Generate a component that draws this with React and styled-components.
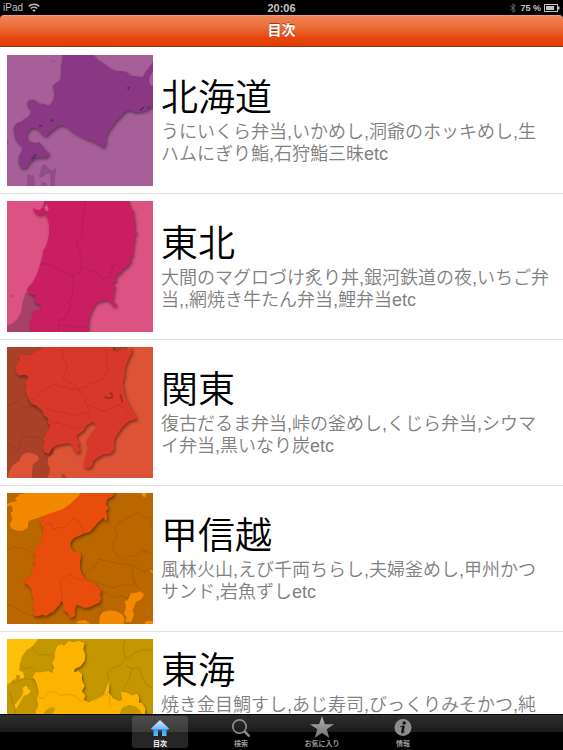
import React from 'react';
import styled, { createGlobalStyle } from 'styled-components';

const GlobalStyle = createGlobalStyle`
  * {
    box-sizing: border-box;
  }

  body {
    margin: 0;
    background: #000;
    font-family: 'Liberation Sans', 'Noto Sans CJK JP', sans-serif;
  }
`;

const Screen = styled.div`
  display: flex;
  flex-direction: column;
  height: 100vh;
  background: #000;
`;

const StatusBar = styled.div`
  display: grid;
  grid-template-columns: 1fr auto 1fr;
  align-items: center;
  flex: none;
  height: 15px;
  padding: 0 3px;
  color: #c4c4c4;
  font-size: 10px;
  line-height: 14px;
`;

const StatusGroup = styled.div`
  display: flex;
  align-items: center;
  justify-content: ${({ $end }) => ($end ? 'flex-end' : 'flex-start')};
  gap: ${({ $end }) => ($end ? '3px' : '5px')};
`;

const Clock = styled.time`
  font-size: 11px;
  font-weight: bold;
`;

const Percent = styled.span`
  font-size: 9px;
  font-weight: bold;
`;

const NavBar = styled.header`
  flex: none;
  height: 32px;
  border-top: 1px solid #f29a78;
  border-bottom: 1px solid #8e3410;
  border-radius: 4px 4px 0 0;
  background: linear-gradient(#f08457, #eb6a35 40%, #e5450d 75%, #e43d05);
`;

const NavTitle = styled.h1`
  margin: 0;
  color: #fff;
  font-size: 14px;
  font-weight: bold;
  line-height: 29px;
  text-align: center;
  text-shadow: 0 -1px 0 rgba(0, 0, 0, 0.45);
`;

const List = styled.ul`
  flex: 1;
  min-height: 0;
  margin: 0;
  padding: 1px 0 0;
  overflow-y: auto;
  scrollbar-width: none;
  background: #fff;
  list-style: none;
`;

const Row = styled.li`
  border-bottom: 1px solid #e0e0e0;
`;

const RowLink = styled.a`
  display: flex;
  align-items: center;
  gap: 8px;
  padding: 7px 12px 7px 7px;
  color: #000;
  text-decoration: none;
`;

const Thumb = styled.svg`
  display: block;
  flex: none;
  width: 146px;
  height: 131px;
`;

const Name = styled.h2`
  margin: 0;
  font-size: 37px;
  font-weight: 350;
  line-height: 44px;
`;

const Detail = styled.p`
  margin: 0;
  color: #808080;
  font-size: 18px;
  font-weight: 350;
  line-height: 22px;
`;

const TabBar = styled.nav`
  display: flex;
  flex: none;
  justify-content: center;
  gap: 25px;
  height: 36px;
  padding: 1px 0 2px;
  border-top: 1px solid #000;
  background: linear-gradient(#2e2e2e, #1b1b1b 50%, #000 50%);
`;

const Tab = styled.button`
  display: flex;
  flex-direction: column;
  align-items: center;
  justify-content: space-between;
  width: 56px;
  padding: 0;
  border: 0;
  border-radius: 3px;
  background: ${({ $active }) => ($active ? 'rgba(255, 255, 255, 0.15)' : 'none')};
  color: ${({ $active }) => ($active ? '#fff' : '#999')};
  font-family: inherit;
  font-size: 7px;
  font-weight: bold;
  line-height: 8px;
  white-space: nowrap;
`;

const TabIcon = styled.svg`
  display: block;
  width: 24px;
  height: 22px;
`;

const Land = styled.path`
  filter: drop-shadow(3px 5px 5px rgba(0, 0, 0, 0.45));
`;

const Border = styled.path`
  fill: none;
  stroke: rgba(60, 0, 0, 0.2);
  stroke-width: 2;
  stroke-linejoin: round;
`;

function HokkaidoMap() {
  return (
    <Thumb viewBox="21 18 438 393" preserveAspectRatio="none" aria-hidden="true">
      <rect x="21" y="18" width="438" height="393" fill="#a65f99" />
      <path fill="#8e4f86" d="M82 411l-1-34 9-2 3 7 9-5 4 34zM118 378l7-28 12-4 6 10 12 8 14-7-3 28-2 26h-12l-2-38-12 3-10 8-10 4zM122 411l4-11 12 2 4 9zM21 272l5 6-5 14z" />
      <path fill="#95548c" d="M152 36l10-2 5 3-8 4z" />
      <Land
        fill="#8a3784"
        d="M188 10L186 40 182 52 184 66 181 92 164 105 158 112 163 128 161 150 154 162 146 170 132 165 118 164 102 152 88 152 80 162 84 174 95 186 86 202 72 210 66 217 56 220 46 226 40 240 44 260 48 274 58 284 68 292 64 308 56 322 56 346 64 357 78 357 88 342 100 330 118 324 132 326 146 320 148 312 136 304 126 290 118 280 104 282 94 278 84 276 79 262 82 250 90 240 104 236 114 240 120 250 138 263 148 252 164 238 180 229 196 230 218 248 250 266 284 280 312 296 318 282 318 262 330 240 352 212 374 190 386 183 404 190 424 188 440 184 450 176 462 170 462 112 450 104 448 90 456 78 462 68 462 34 450 52 434 72 428 84 410 82 392 80 380 70 368 66 352 66 336 62 314 46 294 34 276 14 274 8z"
      />
      <path fill="#5f2560" d="M383 112l6 2-3 9-4-3zM118 227l9 2-4 5-6-2zM153 212l9-1-4 6-6 1zM104 315l8 2-6 4-5 9-9 2zM420 180l14-8-4 8-9 6zM441 178l6-10 2 3-5 8z" />
      <path fill="#a65f99" d="M459 66l-10 18-2 14 4 10 8 4z" />
    </Thumb>
  );
}

function TohokuMap() {
  return (
    <Thumb viewBox="21 18 438 393" preserveAspectRatio="none" aria-hidden="true">
      <rect x="21" y="18" width="438" height="393" fill="#db5283" />
      <path fill="#a64168" d="M78 290l50 20v102H21v-21l14-4 16-14 12-22 4-28z" />
      <Land
        fill="#c91e62"
        d="M134 10L132 22 130 34 118 46 108 44 101 38 100 46 108 56 116 60 128 58 136 56 142 68 147 86 147 118 143 138 136 158 130 166 128 182 124 196 118 216 110 240 98 262 84 278 80 286 94 298 106 302 104 314 104 322 120 330 124 336 118 348 106 346 98 352 97 368 90 380 90 396 96 420 265 420 265 384 272 354 280 338 288 324 304 318 320 316 332 322 338 334 350 336 350 328 340 320 338 308 344 302 338 294 346 290 342 282 350 276 340 272 338 264 352 258 346 250 352 240 362 234 370 222 384 214 386 206 396 200 390 190 400 182 398 170 402 160 400 148 406 138 402 126 411 114 404 102 406 88 402 68 402 50 390 34 384 10z"
      />
      <path fill="#c8648c" d="M133 38l7-10 6 14-6 8z" />
      <Border d="M254 18l-2 42-8 6 6 12-4 20 2 18-8 14-10 16 4 14 8 12-4 12 6 20-2 20-2 8-22 12-10-6-12-8-16-2-8-8-16-4-8-8-16-2-14 4M216 232l6 14 0 20-6 12 2 22-12 20 6 14-10 20-6 18-20 4v35M240 220l12-2 10 6 14 4 14 4 4 10 14 10 22-6 10-38 12 6 8 4M176 396l22-6 22 6 20-2 24 6" />
      <path fill="#a73766" d="M35 302l4-4 1 6-4 3z" />
    </Thumb>
  );
}

function KantoMap() {
  return (
    <Thumb viewBox="21 20 438 393" preserveAspectRatio="none" aria-hidden="true">
      <rect x="21" y="20" width="438" height="393" fill="#dc5435" />
      <path fill="#a94128" d="M21 20h180l-40 200v120l-16 10-2 20 8 14-8 29H96l2-40 18-14-2-12-16-8-18-2-14 8-8 16-20 14-10 16-6 22H21zM184 402l12 2 4 9h-14zM330 20h56l-20 24h-24z" />
      <Border d="M21 200l14-10 14-6 8 10 24 8 16-4 20 14 20 22 12 22M21 310l20 8 10 12 8-6 2-20 8-22 14 10 20-4 18 6" />
      <Land
        fill="#d83829"
        d="M124 14L122 28 106 34 94 42 82 46 66 42 58 46 60 58 52 70 48 82 50 98 58 106 72 104 82 106 84 114 76 124 80 138 76 148 80 160 84 172 90 184 98 192 110 196 120 206 128 212 132 226 144 234 142 246 150 256 146 268 138 276 136 290 128 294 134 306 128 322 134 336 146 342 152 332 158 322 172 314 188 312 204 308 216 314 222 326 232 340 242 328 234 318 240 308 232 298 230 286 240 278 252 270 258 256 270 250 276 244 286 252 288 262 276 276 266 290 258 304 264 318 262 332 256 346 256 358 250 370 254 382 268 384 276 376 280 362 296 350 312 342 330 340 344 326 342 312 344 296 356 276 370 258 388 242 412 236 406 224 398 210 386 190 376 168 372 144 368 128 374 110 374 90 380 70 386 54 394 40 398 20 382 28 368 26 354 34 340 30 336 12z"
      />
      <Border d="M182 20l8 20-4 18 16 14-2 16-8 14-4 10 16 12 18 8 14 14 4 4 6-10 16-2 8-8 18-6 20-6 8-16 8-12-4-18 2-26-6-26M84 182l18-8 14-10 12-12 18-12 20-8 16 8 16-4 14 10 22 2M236 146l8 14 14 14-4 8 8 12 8 22-2 18M130 200l22 10 18 4 18 0 20 8 26 2 14-8 16 6M144 240l16 8 20 0 10 10 14-8 6 14 12-6 10 10 10-12M264 194l16 6 16 8 20 4 18-10 24-8 14 8 14 16 14 12" />
      <path fill="none" stroke="#8e2a1c" strokeWidth="4" d="M314 170l12 4 10-2 0-12-8-2M360 162l8 24" />
    </Thumb>
  );
}

function KoshinetsuMap() {
  return (
    <Thumb viewBox="21 21 438 393" preserveAspectRatio="none" aria-hidden="true">
      <rect x="21" y="21" width="438" height="393" fill="#bb6700" />
      <Border d="M21 192l24-8 26 4 20 10 14 14M21 356l26 8 20 16 28 8 34 10 6 20M344 124l14-16 20-10 16-10 20-8 18 14 18 0 4 30M344 124l8 20-14 30 4 22 12 16 14 12 20-14 18-2 24-14 24 8M250 270l14-14 20-16 14-20 24 6 26 4 20 6 14-4 16 22 4 30 10 20M276 284l20 6 24 10 18 6 30-10 14 4 22-8M300 314l20 8 22 12 20-6 20 10 6-14M388 234l20 10 24 14 27-12M290 350l16 14-8 24-16 20" />
      <Land
        fill="#e94d0c"
        d="M244 14L210 50 120 98 124 118 130 130 128 156 120 166 114 182 104 194 106 212 100 226 106 238 98 252 92 270 84 280 74 278 72 290 84 298 94 310 96 326 102 342 98 360 104 372 100 388 112 392 126 386 138 390 150 382 160 378 170 366 178 358 184 344 190 352 188 368 194 376 204 380 208 392 216 396 226 388 224 374 230 356 240 360 254 366 270 364 284 356 298 350 304 340 300 326 304 314 292 302 282 292 266 284 254 276 244 260 240 244 240 226 244 212 240 198 222 198 212 184 212 168 222 156 236 150 254 142 270 138 280 126 296 108 310 96 320 108 322 92 318 76 326 66 318 56 322 40 340 30 344 14z"
      />
      <Border d="M126 126l6-6 14-8 10 4 4 14 18-6 18 2 14-16 10-14 14 8 10 14 8 20M184 344l2-24-6-22 2-16 14-10 8-6 12 2 10 10 18 4 12 0" />
      <path fill="#f28900" d="M21 21l28 6 30-6h164l-14 16-18 16-22 16-42 14-36 14-26 8-2 20-16 10-20-2-14-6-4-12 8-14-4-18 0-16-12-4zM424 21h16l-4 14-10-6zM298 414l2-26 10-10 20-5 22 4 14 8 8 14-4 15zM374 376l4-14-4-16 10-4 8-20 16-2 14-4 10 10-8 14-16 8-6 14-4 12 4 12-8 22h-18l4-16-8-8zM228 412l8-8 20-2 14 12zM434 408l14-4 11 2v8h-24zM450 250l9 6v6l-8-4z" />
      <path fill="#bb6700" d="M21 21h18l20 6-14 10 6 8-18 4-12 4zM21 62l14-5 4 20-18 3z" />
    </Thumb>
  );
}

function TokaiMap() {
  return (
    <Thumb viewBox="21 22 438 393" preserveAspectRatio="none" aria-hidden="true">
      <rect x="21" y="22" width="438" height="393" fill="#c49700" />
      <path fill="#fcc008" d="M21 22h94l-18 22-18 12-14 20-6 26-2 14 12 6 4 16-12 4-2-12-10 0-2 12-10 4-4 8-12 6z" />
      <path fill="#fcc008" d="M68 168l12-6 4 10 8 4-6 12-14 4-10 16-8 16-6 8-4-12 8-10 12-14 6-14z" />
      <Border d="M60 92l10 22 20-8 16 14M96 46l20 22 20 2 22 0M21 158l30-8 22-10 26 4M40 414l10-160-20-70M376 22l-6 24 6 36-14 18-24 8-16 16 4 22M376 82l24-16 30-12 29 2M376 100l20 12 20-6 8 24 16 30 19 10M396 112l-8 30-18 30" />
      <Land
        fill="#fdb400"
        d="M192 42L206 28 220 32 236 28 254 34 250 52 256 70 254 88 242 104 224 112 222 122 236 118 246 128 246 146 254 164 246 178 256 192 252 204 266 212 280 206 298 196 312 188 318 170 326 150 328 170 326 184 340 200 356 208 366 204 362 180 378 182 396 190 412 186 418 200 416 212 428 216 436 230 434 260 430 420 110 420 114 260 106 240 114 222 110 200 116 184 112 164 106 146 98 136 106 122 124 122 146 118 156 124 162 108 156 94 164 80 164 62 172 42 184 38z"
      />
      <Border d="M110 196l20 4 20-20 18 2 14 10 22-4 22 6 16 14 12-2M284 208l30-20 14 6 2 30M132 246l14-18 18 0" />
      <path fill="#c49700" d="M358 250l8-22 20-8 20 4 16 14 6 20zM130 250l8-14 18-8 10 4-12 18z" />
    </Thumb>
  );
}

function HomeIcon() {
  return (
    <TabIcon viewBox="0 0 24 22" aria-hidden="true">
      <defs>
        <linearGradient id="home" x1="0" y1="0" x2="0" y2="1">
          <stop offset="0" stopColor="#d5ecff" />
          <stop offset="0.55" stopColor="#78b9f8" />
          <stop offset="0.56" stopColor="#3f94f0" />
          <stop offset="1" stopColor="#58c4fb" />
        </linearGradient>
      </defs>
      <path fill="url(#home)" d="M12 4L21 12.500 20 14H18.500V20H14V14H10V20H5.500V14H4L3 12.500z" />
    </TabIcon>
  );
}

function SearchIcon() {
  return (
    <TabIcon viewBox="0 0 24 22" fill="none" stroke="#8c8c8c" aria-hidden="true">
      <circle cx="10.500" cy="10.500" r="6.700" strokeWidth="1.700" />
      <path strokeWidth="2.600" strokeLinecap="round" d="M15.700 15.700l4 4" />
    </TabIcon>
  );
}

function StarIcon() {
  return (
    <TabIcon viewBox="0 0 24 22" aria-hidden="true">
      <defs>
        <linearGradient id="star" x1="0" y1="0" x2="0" y2="1">
          <stop offset="0" stopColor="#b4b4b4" />
          <stop offset="1" stopColor="#707070" />
        </linearGradient>
      </defs>
      <path fill="url(#star)" d="M12 0l2.900 8.200H24l-7.300 5.100L19.400 22 12 16.900 4.600 22l2.700-8.700L0 8.200h9.100z" />
    </TabIcon>
  );
}

function InfoIcon() {
  return (
    <TabIcon viewBox="0 0 24 22" aria-hidden="true">
      <circle cx="12" cy="11.500" r="8.500" fill="#8c8c8c" />
      <circle cx="13.200" cy="7" r="1.700" fill="#111" />
      <path fill="none" stroke="#111" strokeWidth="2.400" d="M12.700 10l-1.600 6.500" />
      <path fill="none" stroke="#111" strokeWidth="1" d="M9.200 10.800l3.600-1M10.500 16.900c1.500 .4 2.500-.4 3.300-1.500" />
    </TabIcon>
  );
}

const regions = [
  {
    name: '北海道',
    detail: 'うにいくら弁当,いかめし,洞爺のホッキめし,生ハムにぎり鮨,石狩鮨三昧etc',
    Map: HokkaidoMap,
  },
  {
    name: '東北',
    detail: '大間のマグロづけ炙り丼,銀河鉄道の夜,いちご弁当,,網焼き牛たん弁当,鯉弁当etc',
    Map: TohokuMap,
  },
  {
    name: '関東',
    detail: '復古だるま弁当,峠の釜めし,くじら弁当,シウマイ弁当,黒いなり炭etc',
    Map: KantoMap,
  },
  {
    name: '甲信越',
    detail: '風林火山,えび千両ちらし,夫婦釜めし,甲州かつサンド,岩魚ずしetc',
    Map: KoshinetsuMap,
  },
  {
    name: '東海',
    detail: '焼き金目鯛すし,あじ寿司,びっくりみそかつ,純系名古屋コーチンとりめし,ひつまぶし弁当,松阪牛弁当etc',
    Map: TokaiMap,
  },
];

const tabs = [
  { label: '目次', Icon: HomeIcon, active: true },
  { label: '検索', Icon: SearchIcon },
  { label: 'お気に入り', Icon: StarIcon },
  { label: '情報', Icon: InfoIcon },
];

export default function App() {
  return (
    <Screen lang="ja">
      <GlobalStyle />

      <StatusBar>
        <StatusGroup>
          <span>iPad</span>
          <svg width="12" height="9" viewBox="0 0 12 9" fill="none" stroke="#c4c4c4" aria-hidden="true">
            <path strokeWidth="1.500" d="M.8 3.400C3.600.5 8.400.5 11.200 3.400M2.900 5.500c1.700-1.700 4.500-1.700 6.200 0" />
            <path fill="#c4c4c4" stroke="none" d="M6 9L4.200 7.100c1-.9 2.600-.9 3.600 0z" />
          </svg>
        </StatusGroup>
        <Clock>20:06</Clock>
        <StatusGroup $end>
          <svg width="8" height="10" viewBox="0 0 8 10" fill="none" stroke="#666" aria-hidden="true">
            <path d="M1.500 2.800l5 4.400L4 9.300V.7l2.500 2.100-5 4.400" />
          </svg>
          <Percent>75 %</Percent>
          <svg width="16" height="8" viewBox="0 0 16 8" aria-hidden="true">
            <rect x=".5" y=".5" width="13" height="7" fill="none" stroke="#c4c4c4" />
            <rect x="2" y="2" width="8" height="4" fill="#c4c4c4" />
            <path fill="#c4c4c4" d="M14 2.500h1.500v3H14z" />
          </svg>
        </StatusGroup>
      </StatusBar>

      <NavBar>
        <NavTitle>目次</NavTitle>
      </NavBar>

      <List>
        {regions.map(({ name, detail, Map }) => (
          <Row key={name}>
            <RowLink href="#">
              <Map />
              <div>
                <Name>{name}</Name>
                <Detail>{detail}</Detail>
              </div>
            </RowLink>
          </Row>
        ))}
      </List>

      <TabBar>
        {tabs.map(({ label, Icon, active }) => (
          <Tab key={label} type="button" $active={active}>
            <Icon />
            {label}
          </Tab>
        ))}
      </TabBar>
    </Screen>
  );
}
